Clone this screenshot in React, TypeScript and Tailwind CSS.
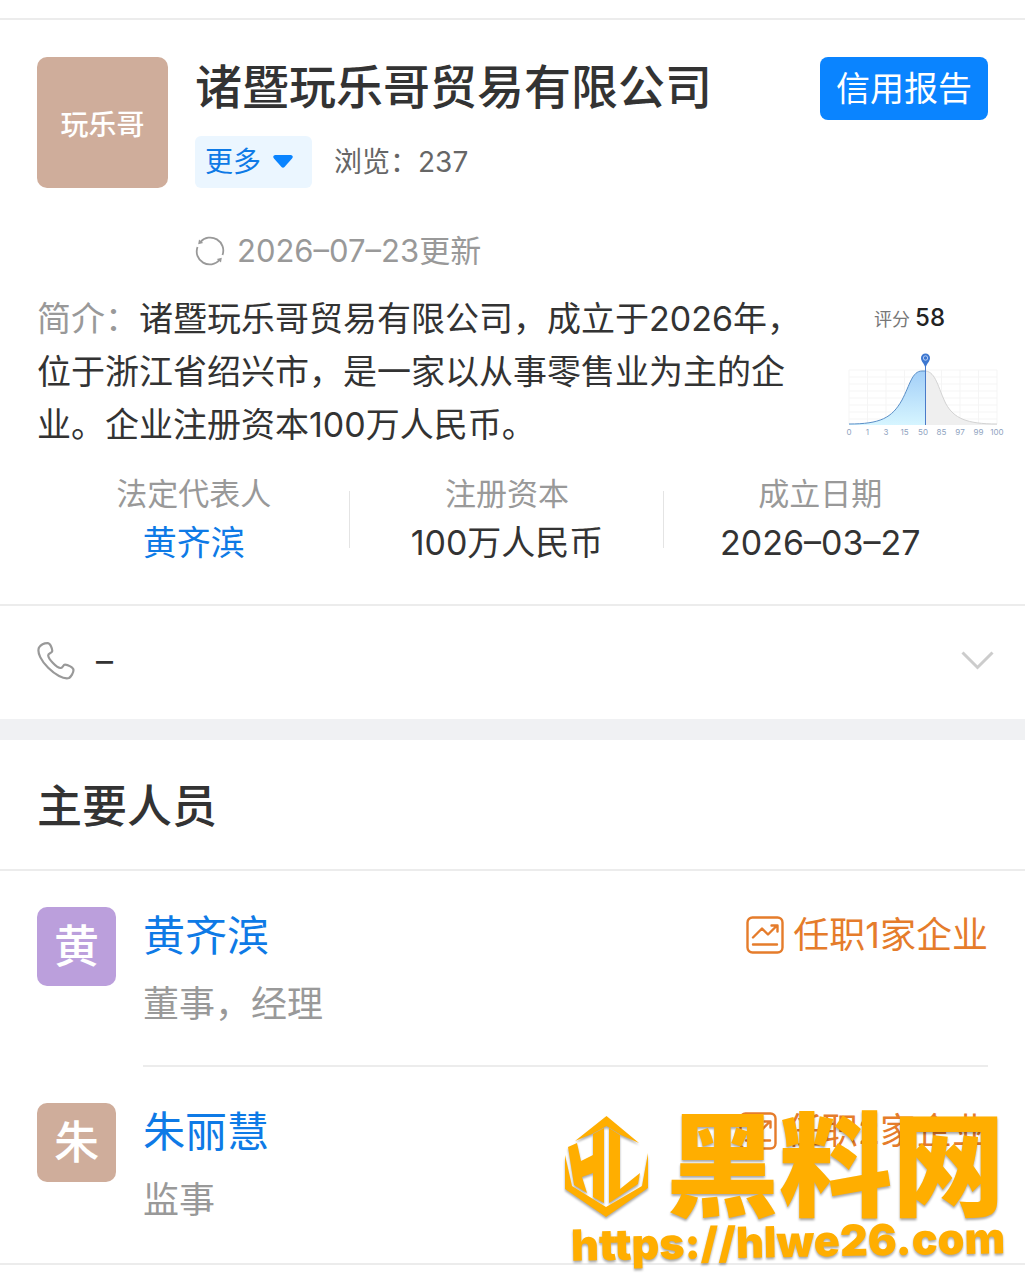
import clsx from "clsx";

const stats = [
    { label: "法定代表人", value: "黄齐滨", link: true },
    { label: "注册资本", value: "100万人民币" },
    { label: "成立日期", value: "2026–03–27" },
];

const people = [
    { name: "黄齐滨", initial: "黄", role: "董事，经理", jobs: "任职1家企业", color: "bg-[#bb9fdc]" },
    { name: "朱丽慧", initial: "朱", role: "监事", jobs: "任职2家企业", color: "bg-[#cfad9b]" },
];

const ticks = ["0", "1", "3", "15", "50", "85", "97", "99", "100"];


function RefreshIcon() {
    return (
        <svg width="30" height="30" viewBox="0 0 30 30" fill="none" stroke="#999" strokeWidth="1.8">
            <path d="M5.500 6A13 13 0 0 1 27.500 19" />
            <path d="M24.500 24A13 13 0 0 1 2.500 11" />
            <path d="M3.200 8.200l.8-4.700 4.200 3.500zM26.800 21.800l-.8 4.700-4.200-3.500z" fill="#999" stroke="none" />
        </svg>
    )
}

function PhoneIcon() {
    return (
        <svg width="38" height="38" viewBox="0 0 38 38" fill="none" stroke="#999" strokeWidth="2.2" strokeLinejoin="round">
            <path d="M2 5.500C4 2.500 8 1.200 10.500 1.200c3 0 4.700 5.300 4.800 7.800 0 2-4.300 2-4.100 4.500C11.500 17 19.500 26 23.500 26c2.300 0 2.500-3.300 4.500-3.300 2.800 0 8.500 2.800 8.500 5.300 0 2.800-2.500 6.800-4.500 8C21 39-2.500 16 2 5.500z" />
        </svg>
    )
}

function TrendIcon() {
    return (
        <svg width="38" height="38" viewBox="0 0 38 38" fill="none" stroke="#e57c2b" strokeWidth="2.4" strokeLinecap="round" strokeLinejoin="round">
            <rect x="1.500" y="1.500" width="35" height="35" rx="5" />
            <path d="M7 21.500l9-9 6 6 8-8M25.500 9.500h6v6M7 28.500h24" />
        </svg>
    )
}

function ScoreChart() {
    return (
        <svg viewBox="0 0 165 90" className="w-full" role="img" aria-label="评分 58">
            <defs>
                <linearGradient id="fill" x1="0" y1="0" x2="0" y2="1">
                    <stop offset="0" stopColor="#a3cff8" />
                    <stop offset="1" stopColor="#d6f5ff" />
                </linearGradient>
            </defs>
            <g stroke="#f5f5f5" strokeWidth="1">
                {[20, 27, 34, 41, 48, 55, 62, 69].map((y) => <path key={y} d={`M9 ${y}H157`} />)}
                {ticks.map((t, i) => <path key={t} d={`M${9 + i * 18.5} 20V74`} />)}
            </g>
            <path d="M9 74C40 74 52 68 62 50C70 35 72 21 82 21H85.500V75H9z" fill="url(#fill)" />
            <path d="M85.500 21C96 22 98 38 106 54C114 68 126 74 157 74V75H85.500z" fill="#efefef" />
            <path d="M85.500 21C96 22 98 38 106 54C114 68 126 74 157 74" fill="none" stroke="#d3d3d3" />
            <path d="M9 74C40 74 52 68 62 50C70 35 72 21 82 21H85.500" fill="none" stroke="#5b8fc7" />
            <path d="M85.500 14V75" stroke="#4a7bc8" />
            <path d="M85.500 18C84 13 81 11.500 81 8a4.500 4.500 0 0 1 9 0C90 11.500 87 13 85.500 18z" fill="#3d77d0" />
            <circle cx="85.500" cy="8" r="2.200" fill="none" stroke="#cfe0fa" strokeWidth=".8" />
            {ticks.map((t, i) => (
                <text key={t} x={9 + i * 18.5} y="85" textAnchor="middle" fontSize="8" fill="#8fa3c0">{t}</text>
            ))}
        </svg>
    )
}

function Watermark() {
    return (
        <div className="absolute right-5 bottom-1 flex flex-col items-end text-[#ffae00] [filter:drop-shadow(0_2px_1px_#00000055)] pointer-events-none">
            <div className="flex items-center gap-4">
                <svg width="86" height="102" viewBox="0 0 86 102" fill="currentColor">
                    <path d="M11 25L42.500 0 75 27 57 19 42.500 10 28 18z" />
                    <path d="M4 31l9-4 4 18 12-6V18l11-6v75l-11-6V57l-11 4 5 16-13-8z" />
                    <path d="M45 12l11 7v54l20-16-2 11-29 19z" />
                    <path d="M1 39l7 31 34 21 36-21 6-33v35L42 101 1 73z" />
                </svg>
                <span className="text-[113px] leading-[113px] font-black">黑料网</span>
            </div>
            <span className="text-[43px] leading-[36px] font-black -rotate-1">https://hlwe26.com</span>
        </div>
    )
}

export default function App() {
    return (
        <main className="w-full bg-white text-[#333] font-['Inter','Noto_Sans_CJK_SC',sans-serif] pt-[18px] pb-4">

            <header className="border-t-2 border-[#ececec] px-[37px] pt-[37px] flex items-start gap-[27px]">
                <div className="size-[131px] shrink-0 rounded-[10px] bg-[#cfad9b] text-white text-[28px] font-medium flex items-center justify-center pt-1">玩乐哥</div>
                <div className="flex-1">
                    <h1 className="text-[47px] leading-[60px] font-medium">诸暨玩乐哥贸易有限公司</h1>
                    <div className="mt-[19px] flex items-center gap-[22px] text-[28px] leading-[52px]">
                        <button className="h-[52px] pl-[10px] pr-[19px] rounded-md bg-[#ebf6ff] text-[#0e7ae6] flex items-center gap-[12px]">
                            更多
                            <svg width="20" height="14" viewBox="0 0 20 14" fill="#0a84ff"><path d="M2 0h16q3 1 1 3.500l-7.500 8.500q-1.500 1.500-3 0L1 3.500Q-1 1 2 0z" /></svg>
                        </button>
                        <span className="text-[#666]">浏览：237</span>
                    </div>
                    <div className="mt-10 flex items-center gap-3 text-[31px] leading-[46px] text-[#999]">
                        <RefreshIcon />
                        <span>2026–07–23更新</span>
                    </div>
                </div>
                <button className="h-[63px] px-4 rounded-lg bg-[#0a84ff] text-white text-[34px] leading-[60px]">信用报告</button>
            </header>

            <section className="mt-[18px] pl-[37px] pr-[20px] flex items-start justify-between">
                <p className="w-[770px] text-[34px] leading-[53px]">
                    <span className="text-[#999]">简介：</span>诸暨玩乐哥贸易有限公司，成立于2026年，位于浙江省绍兴市，是一家以从事零售业为主的企业。企业注册资本100万人民币。
                </p>
                <div className="w-[165px] pt-[10px]">
                    <p className="pl-[34px] text-[18px] leading-[32px] text-[#777] whitespace-nowrap">评分 <span className="text-[24px] font-medium text-[#222]">58</span></p>
                    <div className="mt-[14px]"><ScoreChart /></div>
                </div>
            </section>

            <dl className="mt-[20px] pl-[37px] pr-[48px] pb-[35px] grid grid-cols-3 text-center">
                {stats.map((s, i) => (
                    <div key={s.label} className="relative">
                        <dt className="text-[31px] leading-[46px] text-[#999]">{s.label}</dt>
                        <dd className="text-[34px] leading-[52px]">
                            {s.link ? <a href="#" className="text-[#0e7ae6]">{s.value}</a> : s.value}
                        </dd>
                        {i < 2 && <span className="absolute right-0 top-5 h-[57px] w-px bg-[#e4e4e4]"></span>}
                    </div>
                ))}
            </dl>

            <div className="h-[115px] border-t-2 border-[#ececec] pl-[37px] pr-[31px] pb-1 flex items-center gap-[21px]">
                <PhoneIcon />
                <span className="flex-1 text-[34px]">–</span>
                <button aria-label="展开">
                    <svg width="33" height="20" viewBox="0 0 33 20" fill="none" stroke="#ccc" strokeWidth="3"><path d="M1.500 1.500l15 15 15-15" /></svg>
                </button>
            </div>

            <section className="border-t-[21px] border-[#f0f1f3]">
                <h2 className="px-[37px] pt-1 text-[45px] leading-[125px] font-medium">主要人员</h2>
                <ul className="relative border-y-2 border-[#ececec]">
                    {people.map((p, i) => (
                        <li key={p.name} className="pl-[37px] flex gap-[27px]">
                            <div className={clsx("mt-[36px] size-[79px] shrink-0 rounded-[10px] text-white text-[45px] font-medium flex items-center justify-center", p.color)}>{p.initial}</div>
                            <div className={clsx("flex-1 mr-[37px] pt-[34px] h-[196px] flex justify-between items-start", i === 0 && "border-b-2 border-[#ececec]")}>
                                <div>
                                    <a href="#" className="block text-[42px] leading-[62px] text-[#0e7ae6]">{p.name}</a>
                                    <p className="mt-1 text-[36px] leading-[66px] text-[#999]">{p.role}</p>
                                </div>
                                <a href="#" className="flex items-center gap-[9px] text-[36px] leading-[60px] text-[#e57c2b]">
                                    <TrendIcon />
                                    {p.jobs}
                                </a>
                            </div>
                        </li>
                    ))}
                    <li><Watermark /></li>
                </ul>
            </section>

        </main>
    )
}
